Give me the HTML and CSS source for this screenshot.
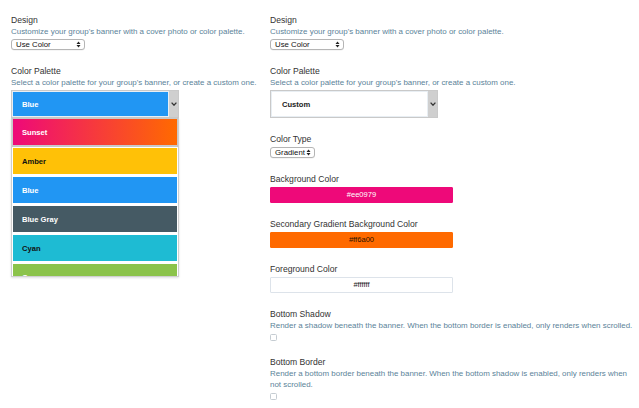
FILE: index.html
```html
<!DOCTYPE html>
<html>
<head>
<meta charset="utf-8">
<link rel="stylesheet" href="styles.css">
</head>
<body>
<div class="page">
  <div class="col col-left">
    <div class="field">
      <div class="label">Design</div>
      <div class="desc">Customize your group's banner with a cover photo or color palette.</div>
      <div class="mini-select w-use">Use Color<span class="updown"><svg width="5" height="7" viewBox="0 0 5 7"><path d="M0.5 3 L2.5 0.6 L4.5 3 Z M0.5 4 L2.5 6.4 L4.5 4 Z" fill="#222"/></svg></span></div>
    </div>
    <div class="field">
      <div class="label">Color Palette</div>
      <div class="desc">Select a color palette for your group's banner, or create a custom one.</div>
      <div class="palette-wrap">
        <div class="palette-select">
          <div class="palette-value swatch-blue">Blue</div>
          <div class="palette-arrow"><svg width="6" height="4" viewBox="0 0 6 4"><path d="M0.6 0.6 L3 3.2 L5.4 0.6" fill="none" stroke="#333" stroke-width="1.3"/></svg></div>
        </div>
        <div class="palette-menu">
          <div class="menu-row active"><div class="menu-item swatch-sunset">Sunset</div></div>
          <div class="menu-row"><div class="menu-item swatch-amber">Amber</div></div>
          <div class="menu-row"><div class="menu-item swatch-blue">Blue</div></div>
          <div class="menu-row"><div class="menu-item swatch-bluegray">Blue Gray</div></div>
          <div class="menu-row"><div class="menu-item swatch-cyan">Cyan</div></div>
          <div class="menu-row"><div class="menu-item swatch-green">Green</div></div>
        </div>
      </div>
    </div>
  </div>

  <div class="col col-right">
    <div class="field">
      <div class="label">Design</div>
      <div class="desc">Customize your group's banner with a cover photo or color palette.</div>
      <div class="mini-select w-use">Use Color<span class="updown"><svg width="5" height="7" viewBox="0 0 5 7"><path d="M0.5 3 L2.5 0.6 L4.5 3 Z M0.5 4 L2.5 6.4 L4.5 4 Z" fill="#222"/></svg></span></div>
    </div>
    <div class="field">
      <div class="label">Color Palette</div>
      <div class="desc">Select a color palette for your group's banner, or create a custom one.</div>
      <div class="palette-select">
        <div class="palette-value custom">Custom</div>
        <div class="palette-arrow"><svg width="6" height="4" viewBox="0 0 6 4"><path d="M0.6 0.6 L3 3.2 L5.4 0.6" fill="none" stroke="#333" stroke-width="1.3"/></svg></div>
      </div>
    </div>
    <div class="field">
      <div class="label">Color Type</div>
      <div class="mini-select w-grad">Gradient<span class="updown"><svg width="5" height="7" viewBox="0 0 5 7"><path d="M0.5 3 L2.5 0.6 L4.5 3 Z M0.5 4 L2.5 6.4 L4.5 4 Z" fill="#222"/></svg></span></div>
    </div>
    <div class="field">
      <div class="label">Background Color</div>
      <div class="color-input c-pink">#ee0979</div>
    </div>
    <div class="field">
      <div class="label">Secondary Gradient Background Color</div>
      <div class="color-input c-orange">#ff6a00</div>
    </div>
    <div class="field">
      <div class="label">Foreground Color</div>
      <div class="color-input c-white">#ffffff</div>
    </div>
    <div class="field">
      <div class="label">Bottom Shadow</div>
      <div class="desc">Render a shadow beneath the banner. When the bottom border is enabled, only renders when scrolled.</div>
      <div class="checkbox"></div>
    </div>
    <div class="field">
      <div class="label">Bottom Border</div>
      <div class="desc">Render a bottom border beneath the banner. When the bottom shadow is enabled, only renders when not scrolled.</div>
      <div class="checkbox"></div>
    </div>
  </div>
</div>
</body>
</html>
```

FILE: styles.css
```css
html, body {
  margin: 0;
  padding: 0;
  background: #ffffff;
}

body {
  font-family: "Liberation Sans", Arial, Helvetica, sans-serif;
  color: #333333;
}

.page {
  display: flex;
  gap: 11px;
  padding: 14px 0 0 11px;
}

.col-left {
  width: 248px;
}

.col-right {
  width: 365px;
}

.field {
  margin-bottom: 15px;
}

.label {
  font-size: 8.6px;
  line-height: 12px;
  color: #333333;
}

.desc {
  font-size: 7.95px;
  line-height: 11px;
  color: #5b8399;
}

.mini-select {
  margin-top: 2px;
  height: 9px;
  border: 1px solid #b5b5b5;
  border-radius: 3px;
  background: #ffffff;
  box-shadow: 0 0.5px 0.5px rgba(0,0,0,0.08);
  font-size: 7.8px;
  line-height: 9px;
  color: #111111;
  padding: 0 3px 0 4px;
  display: flex;
  align-items: center;
  justify-content: space-between;
  box-sizing: content-box;
}

.w-use { width: 65px; }
.w-grad { width: 36px; padding-left: 4px; }

.updown {
  display: flex;
  align-items: center;
}

.palette-wrap {
  position: relative;
}

.palette-select {
  margin-top: 2px;
  width: 168px;
  height: 28px;
  box-sizing: border-box;
  border: 1px solid #c9c9c9;
  display: flex;
  background: #ffffff;
}

.palette-value {
  flex: 1;
  display: flex;
  align-items: center;
  padding-left: 9px;
  font-size: 7.6px;
  font-weight: bold;
  border: 1px solid #e8eef3;
}

.palette-value.custom {
  color: #222222;
  background: #ffffff;
  padding-left: 10px;
}

.palette-arrow {
  width: 9px;
  background: #cfcfcf;
  display: flex;
  align-items: center;
  justify-content: center;
}

.palette-menu {
  position: absolute;
  left: 0;
  top: 28px;
  width: 168px;
  height: 159px;
  box-sizing: border-box;
  border: 1px solid #cfcfcf;
  border-top: none;
  background: #ffffff;
  overflow: hidden;
  box-shadow: 0 1px 2px rgba(0,0,0,0.12);
}

.menu-row {
  padding: 1px 1px 2px 1px;
}

.menu-row.active {
  background: #c8c8c8;
}

.menu-item {
  height: 26px;
  display: flex;
  align-items: center;
  padding-left: 9px;
  font-size: 7.6px;
  font-weight: bold;
}

.swatch-blue { background: #2196f3; color: #ffffff; }
.swatch-sunset { background: linear-gradient(90deg, #ee0979, #ff6a00); color: #ffffff; }
.swatch-amber { background: #ffc107; color: #111111; }
.swatch-bluegray { background: #455a64; color: #ffffff; }
.swatch-cyan { background: #1ebbd3; color: #111111; }
.swatch-green { background: #8bc34a; color: #ffffff; }

.color-input {
  margin-top: 2px;
  width: 183px;
  height: 16px;
  box-sizing: border-box;
  border: 1px solid #dde3ea;
  border-radius: 1px;
  font-size: 7.6px;
  line-height: 14px;
  text-align: center;
}

.c-pink { background: #ee0979; color: #ffffff; border-color: #ee0979; }
.c-orange { background: #ff6a00; color: #2a1200; border-color: #ff6a00; }
.c-white { background: #ffffff; color: #222222; }

.checkbox {
  margin-top: 3px;
  width: 5px;
  height: 5px;
  border: 1px solid #c5ccd2;
  border-radius: 1.5px;
  background: #ffffff;
}
```
